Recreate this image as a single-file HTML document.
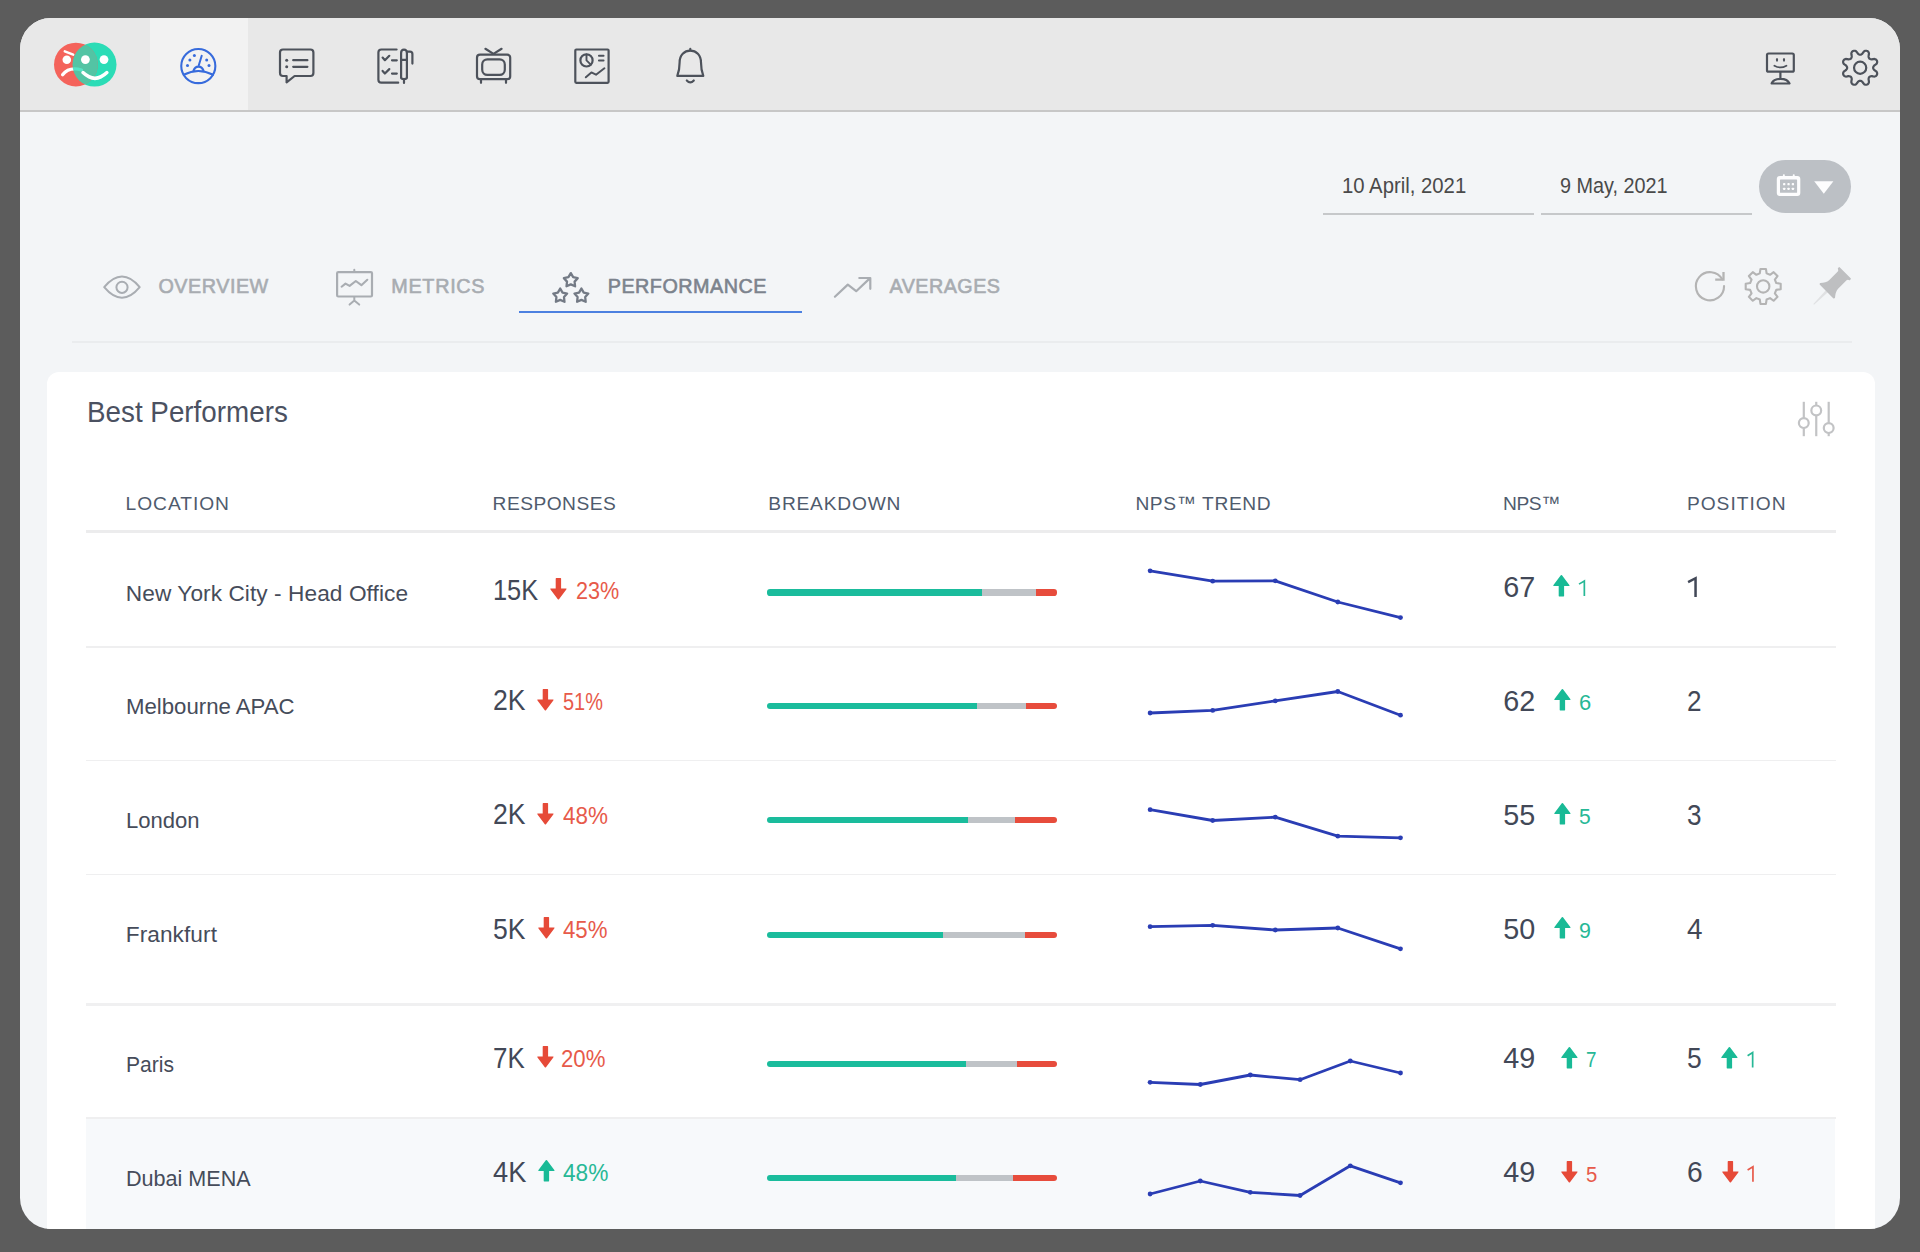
<!DOCTYPE html><html><head><meta charset="utf-8"><title>Best Performers</title><style>
html,body{margin:0;padding:0}
body{width:1920px;height:1252px;background:#5c5c5c;overflow:hidden;position:relative;font-family:"Liberation Sans",sans-serif}
#win{position:absolute;left:20px;top:18px;width:1880px;height:1211px;border-radius:31px;background:#f3f5f7;overflow:hidden}
#pg{position:absolute;left:-20px;top:-18px;width:1920px;height:1252px}
#pg>*{position:absolute}
.t{white-space:nowrap;line-height:1;transform-origin:0 50%}
#bar{left:20px;top:18px;width:1880px;height:92.5px;background:#e8e8e8}
#act{left:149.5px;top:18px;width:98.5px;height:92.5px;background:#f2f2f2}
#barline{left:20px;top:109.9px;width:1880px;height:2px;background:#c7c7c7}
.ul{top:213.2px;height:1.6px;background:#c6c8ca}
#pill{left:1758.7px;top:160.2px;width:92px;height:52.6px;border-radius:27px;background:#bcc0c5}
#tabul{left:519px;top:311.2px;width:282.5px;height:2.2px;background:#4c80e0}
#sep{left:72px;top:341.4px;width:1780px;height:1.4px;background:#eaecee}
#card{left:46.6px;top:372px;width:1828.4px;height:900px;border-radius:12px;background:#fff}
.hl{left:86px;width:1750px;background:#efeff0}
#hov{left:86px;top:1118.6px;width:1748.5px;height:120px;background:#f7f9fb}
.bar{left:767.3px;width:290.1px;height:6.2px;border-radius:3.1px;overflow:hidden;display:flex}
.bar i{display:block;height:100%}
.a{overflow:visible}
</style></head><body><div id="win"><div id="pg">
<div id="bar"></div><div id="act"></div><div id="barline"></div>
<svg class="a" style="left:0;top:0" width="1920" height="1252" viewBox="0 0 1920 1252" fill="none" stroke-linecap="round" stroke-linejoin="round"><defs><clipPath id="gc"><circle cx="94.5" cy="64.6" r="22"/></clipPath></defs><circle cx="94.5" cy="64.6" r="22" fill="#2bdcb6"/><circle cx="75.9" cy="64.6" r="21.9" fill="#f4635b"/><circle cx="66.8" cy="59.7" r="4.3" fill="#fff"/><path d="M64.8,51.4 L73.2,54.6" stroke="#fff" stroke-width="2.5"/><path d="M62.6,74.8 Q69,66.5 81.5,70" stroke="#fff" stroke-width="3.3"/><circle cx="75.9" cy="64.6" r="21.9" fill="#2bdcb6" opacity="0.8" clip-path="url(#gc)"/><circle cx="85.4" cy="59.6" r="4.4" fill="#fff"/><circle cx="104" cy="59.6" r="4.4" fill="#fff"/><path d="M83,72.6 Q95,84 106.9,72.6" stroke="#fff" stroke-width="3.5"/><g stroke="#376bdc" stroke-width="2.1"><circle cx="198.3" cy="66.1" r="17.05"/><path d="M183.7,74.7 Q198.3,67.3 213,74.7"/><path d="M193.6,70.6 Q194.9,66.7 198.5,66.7 Q202.1,66.7 203.4,70.6" stroke-width="2.3"/><path d="M198.8,65.2 L201.7,55.7" stroke-width="2"/></g><circle cx="187.5" cy="65.5" r="1.5" fill="#376bdc"/><circle cx="189.9" cy="59.9" r="1.5" fill="#376bdc"/><circle cx="194.4" cy="55.5" r="1.5" fill="#376bdc"/><circle cx="206.7" cy="59.9" r="1.5" fill="#376bdc"/><circle cx="209" cy="65.5" r="1.5" fill="#376bdc"/><g stroke="#4d525b" stroke-width="2.2"><path d="M283,49.5 H310.4 Q313.4,49.5 313.4,52.5 V73 Q313.4,76 310.4,76 H294.6 L286.6,82.4 V76 H283 Q280,76 280,73 V52.5 Q280,49.5 283,49.5 Z"/><path d="M293.2,60.2 H307.4 M293.2,66.8 H307.4"/></g><circle cx="286.7" cy="60.2" r="1.5" fill="#4d525b"/><circle cx="286.7" cy="66.8" r="1.5" fill="#4d525b"/><g stroke="#4d525b" stroke-width="2.2"><path d="M396.6,49.5 H381.4 Q378.4,49.5 378.4,52.5 V79.7 Q378.4,82.7 381.4,82.7 H398.2"/><path d="M382.6,57.6 L384.9,60.2 L389.3,55.8 M392,60.3 H396.8"/><path d="M382.6,70.9 L384.9,73.5 L389.3,69.1 M392,73.6 H396.8"/><path d="M401.1,53 Q401.1,49.6 404,49.6 Q406.9,49.6 406.9,53 V77.5 Q406.9,79 404,79 Q401.1,79 401.1,77.5 Z M401.1,59.8 H406.9 M404,79 V83"/><path d="M407.2,51.7 H410 Q412.4,51.7 412.4,54.1 V63.6"/></g><g stroke="#4d525b" stroke-width="2.2"><rect x="477" y="54.7" width="33.2" height="24.5" rx="3"/><rect x="482.2" y="59.3" width="22.6" height="15.6" rx="5.2"/><path d="M485.4,48.8 L493.5,53.9 L501.6,48.8 M481,80 V82.8 M506,80 V82.8"/></g><g stroke="#4d525b" stroke-width="2.2"><rect x="575.3" y="49.5" width="33.3" height="33.3" rx="1"/><circle cx="586.5" cy="60.4" r="6.1"/><path d="M586.5,54.4 V60.4 L590.8,64.6" stroke-width="1.9"/><path d="M598.9,55.8 H603.6 M598.9,60.5 H603.6" stroke-width="1.9"/><path d="M585.8,77.3 L591.4,72.4 L596,74.7 L604.4,68.3" stroke-width="2"/></g><g stroke="#4d525b" stroke-width="2.2"><path d="M677.3,75.9 Q679.6,70 679.6,62.5 C679.6,55 684.4,50.7 690.3,50.7 C696.2,50.7 701,55 701,62.5 Q701,70 703.3,75.9 Z"/><path d="M690.3,48.9 V50.5 M686.8,80.5 Q690.3,84.4 693.8,80.5"/></g><g stroke="#4d525b" stroke-width="2.2"><rect x="1767" y="53.5" width="26.8" height="18.2" rx="1.5"/><path d="M1780.4,72 V78.6 M1771.6,83.5 Q1773.5,78.9 1780.5,78.9 Q1787.5,78.9 1789.5,83.5 Z"/><path d="M1774.4,65.7 Q1780.3,69.2 1786.4,65.7" stroke-width="1.8"/></g><ellipse cx="1777" cy="59.8" rx="1.1" ry="1.9" fill="#4d525b"/><ellipse cx="1784" cy="59.8" rx="1.1" ry="1.9" fill="#4d525b"/><g stroke="#4d525b" stroke-width="2.2"><path d="M1873.15,67.75 L1873.22,68.26 L1873.42,68.79 L1873.76,69.36 L1874.29,69.99 L1875.45,70.79 L1876.57,71.69 L1876.98,72.50 L1877.16,73.28 L1877.15,74.02 L1876.96,74.71 L1876.61,75.34 L1876.09,75.87 L1875.41,76.30 L1874.55,76.57 L1873.12,76.42 L1871.73,76.16 L1870.92,76.24 L1870.27,76.39 L1869.75,76.63 L1869.34,76.94 L1869.03,77.35 L1868.79,77.87 L1868.64,78.52 L1868.56,79.33 L1868.82,80.72 L1868.97,82.15 L1868.70,83.01 L1868.27,83.69 L1867.74,84.21 L1867.11,84.56 L1866.42,84.75 L1865.68,84.76 L1864.90,84.58 L1864.09,84.17 L1863.19,83.05 L1862.39,81.89 L1861.76,81.36 L1861.19,81.02 L1860.66,80.82 L1860.15,80.75 L1859.64,80.82 L1859.11,81.02 L1858.54,81.36 L1857.91,81.89 L1857.11,83.05 L1856.21,84.17 L1855.40,84.58 L1854.62,84.76 L1853.88,84.75 L1853.19,84.56 L1852.56,84.21 L1852.03,83.69 L1851.60,83.01 L1851.33,82.15 L1851.48,80.72 L1851.74,79.33 L1851.66,78.52 L1851.51,77.87 L1851.27,77.35 L1850.96,76.94 L1850.55,76.63 L1850.03,76.39 L1849.38,76.24 L1848.57,76.16 L1847.18,76.42 L1845.75,76.57 L1844.89,76.30 L1844.21,75.87 L1843.69,75.34 L1843.34,74.71 L1843.15,74.02 L1843.14,73.28 L1843.32,72.50 L1843.73,71.69 L1844.85,70.79 L1846.01,69.99 L1846.54,69.36 L1846.88,68.79 L1847.08,68.26 L1847.15,67.75 L1847.08,67.24 L1846.88,66.71 L1846.54,66.14 L1846.01,65.51 L1844.85,64.71 L1843.73,63.81 L1843.32,63.00 L1843.14,62.22 L1843.15,61.48 L1843.34,60.79 L1843.69,60.16 L1844.21,59.63 L1844.89,59.20 L1845.75,58.93 L1847.18,59.08 L1848.57,59.34 L1849.38,59.26 L1850.03,59.11 L1850.55,58.87 L1850.96,58.56 L1851.27,58.15 L1851.51,57.63 L1851.66,56.98 L1851.74,56.17 L1851.48,54.78 L1851.33,53.35 L1851.60,52.49 L1852.03,51.81 L1852.56,51.29 L1853.19,50.94 L1853.88,50.75 L1854.62,50.74 L1855.40,50.92 L1856.21,51.33 L1857.11,52.45 L1857.91,53.61 L1858.54,54.14 L1859.11,54.48 L1859.64,54.68 L1860.15,54.75 L1860.66,54.68 L1861.19,54.48 L1861.76,54.14 L1862.39,53.61 L1863.19,52.45 L1864.09,51.33 L1864.90,50.92 L1865.68,50.74 L1866.42,50.75 L1867.11,50.94 L1867.74,51.29 L1868.27,51.81 L1868.70,52.49 L1868.97,53.35 L1868.82,54.78 L1868.56,56.17 L1868.64,56.98 L1868.79,57.63 L1869.03,58.15 L1869.34,58.56 L1869.75,58.87 L1870.27,59.11 L1870.92,59.26 L1871.73,59.34 L1873.12,59.08 L1874.55,58.93 L1875.41,59.20 L1876.09,59.63 L1876.61,60.16 L1876.96,60.79 L1877.15,61.48 L1877.16,62.22 L1876.98,63.00 L1876.57,63.81 L1875.45,64.71 L1874.29,65.51 L1873.76,66.14 L1873.42,66.71 L1873.22,67.24 Z"/><circle cx="1860.15" cy="67.75" r="6.1"/></g></svg>
<div class="t" style="left:1342.30px;top:175.04px;font-size:21.22px;color:#4a4a4a;transform:scaleX(0.9570);">10 April, 2021</div>
<div class="t" style="left:1559.60px;top:175.04px;font-size:21.22px;color:#4a4a4a;transform:scaleX(0.9340);">9 May, 2021</div>
<div class="ul" style="left:1322.5px;width:211px"></div><div class="ul" style="left:1540.5px;width:211px"></div>
<div id="pill"></div>
<svg class="a" style="left:0;top:0" width="1920" height="1252" viewBox="0 0 1920 1252" fill="none" stroke-linecap="round" stroke-linejoin="round"><rect x="1776.8" y="176" width="23.5" height="20.1" rx="3" fill="#fdfdfe"/><rect x="1782.9" y="174.2" width="1.9" height="3" rx="0.8" fill="#fdfdfe"/><rect x="1792.8" y="174.2" width="1.9" height="3" rx="0.8" fill="#fdfdfe"/><rect x="1780" y="179.5" width="17.1" height="13.3" rx="0.6" fill="#bcc0c5"/><rect x="1783.05" y="183.05" width="2.3" height="2.3" rx="0.7" fill="#fdfdfe"/><rect x="1787.40" y="183.05" width="2.3" height="2.3" rx="0.7" fill="#fdfdfe"/><rect x="1791.75" y="183.05" width="2.3" height="2.3" rx="0.7" fill="#fdfdfe"/><rect x="1783.05" y="187.65" width="2.3" height="2.3" rx="0.7" fill="#fdfdfe"/><rect x="1787.40" y="187.65" width="2.3" height="2.3" rx="0.7" fill="#fdfdfe"/><rect x="1791.75" y="187.65" width="2.3" height="2.3" rx="0.7" fill="#fdfdfe"/><path d="M1814.2,181.2 H1833.4 L1823.8,193.7 Z" fill="#fdfdfe"/></svg>
<div class="t" style="left:158.40px;top:277.07px;font-size:19.77px;color:#a8acb1;letter-spacing:0.53px;-webkit-text-stroke:0.6px #a8acb1;">OVERVIEW</div>
<div class="t" style="left:391.30px;top:277.07px;font-size:19.77px;color:#a8acb1;letter-spacing:0.71px;-webkit-text-stroke:0.6px #a8acb1;">METRICS</div>
<div class="t" style="left:607.70px;top:277.07px;font-size:19.77px;color:#7c838d;letter-spacing:0.51px;-webkit-text-stroke:0.6px #7c838d;">PERFORMANCE</div>
<div class="t" style="left:889.50px;top:277.07px;font-size:19.77px;color:#a8acb1;letter-spacing:0.46px;-webkit-text-stroke:0.6px #a8acb1;">AVERAGES</div>
<div id="tabul"></div><div id="sep"></div>
<svg class="a" style="left:0;top:0" width="1920" height="1252" viewBox="0 0 1920 1252" fill="none" stroke-linecap="round" stroke-linejoin="round"><g stroke="#a9adb2" stroke-width="2"><path d="M104.2,287.2 Q122,266 139.7,287.2 Q122,308.4 104.2,287.2 Z"/><circle cx="122" cy="287.3" r="5.6"/><rect x="337.1" y="272.1" width="34.9" height="24.4" rx="1.2" stroke-width="2.2"/><path d="M354.3,269.7 V271.5 M354.3,297 V300.6 L349.6,304.6 M354.3,300.6 L359.2,304.6"/><path d="M341.6,286.7 L345.5,283.6 L349.6,285.9 L355.8,281 L361.4,285.2 L367.3,279.8" stroke-width="2.1"/><path d="M834.9,296.7 L847.8,284.6 L856.2,291.2 L869.8,278.4 M859.3,278 H870.3 V288.8" stroke-width="2.2"/></g><g stroke="#737a85" stroke-width="2.3"><path d="M570.80,273.10 L573.15,277.16 L577.74,278.14 L574.60,281.64 L575.09,286.31 L570.80,284.40 L566.51,286.31 L567.00,281.64 L563.86,278.14 L568.45,277.16 Z"/><path d="M560.20,288.55 L562.55,292.61 L567.14,293.59 L564.00,297.09 L564.49,301.76 L560.20,299.85 L555.91,301.76 L556.40,297.09 L553.26,293.59 L557.85,292.61 Z"/><path d="M581.40,288.55 L583.75,292.61 L588.34,293.59 L585.20,297.09 L585.69,301.76 L581.40,299.85 L577.11,301.76 L577.60,297.09 L574.46,293.59 L579.05,292.61 Z"/></g><g stroke="#b4b4b4" stroke-width="2.1"><path d="M1724.05,285.95 A14.1,14.1 0 1 1 1722.28,279.36"/><path d="M1723.5,271.9 V279.7 H1715.2" stroke-width="2.3" stroke-linejoin="miter" stroke-linecap="butt"/><path d="M1759.79,273.39 L1760.47,268.96 L1765.93,268.96 L1766.61,273.39 L1770.03,274.80 L1773.63,272.15 L1777.50,276.02 L1774.85,279.62 L1776.26,283.04 L1780.69,283.72 L1780.69,289.18 L1776.26,289.86 L1774.85,293.28 L1777.50,296.88 L1773.63,300.75 L1770.03,298.10 L1766.61,299.51 L1765.93,303.94 L1760.47,303.94 L1759.79,299.51 L1756.37,298.10 L1752.77,300.75 L1748.90,296.88 L1751.55,293.28 L1750.14,289.86 L1745.71,289.18 L1745.71,283.72 L1750.14,283.04 L1751.55,279.62 L1748.90,276.02 L1752.77,272.15 L1756.37,274.80 Z"/><circle cx="1763.2" cy="286.45" r="6.2"/></g><path d="M1813.35,304.06 L1826.08,289.92 L1828.13,291.97 L1813.99,304.70 Z" fill="#e0e1e3" stroke="none"/><path d="M1819.89,284.86 Q1818.97,283.94 1820.18,283.03 Q1825.97,282.74 1829.08,280.20 L1837.78,271.50 Q1838.63,270.51 1837.99,269.31 Q1837.57,268.60 1838.14,268.04 L1838.84,267.33 Q1839.34,266.83 1839.90,267.40 L1850.65,278.15 Q1851.22,278.71 1850.72,279.21 L1850.01,279.91 Q1849.45,280.48 1848.74,280.06 Q1847.54,279.42 1846.55,280.27 L1837.85,288.97 Q1835.31,292.08 1835.02,297.87 Q1834.11,299.08 1833.19,298.16 Z" fill="#bebfc1" stroke="none"/></svg>
<div id="card"></div>
<div class="t" style="left:87.40px;top:397.45px;font-size:29.36px;color:#4b5161;transform:scaleX(0.9467);">Best Performers</div>
<svg class="a" style="left:0;top:0" width="1920" height="1252" viewBox="0 0 1920 1252" fill="none" stroke-linecap="round" stroke-linejoin="round"><g stroke="#c2c3c5" stroke-width="2.2" stroke-linecap="butt"><path d="M1803.8,401.8 V436.2"/><circle cx="1803.8" cy="423.1" r="4.9" fill="#fff"/><path d="M1816.25,401.8 V436.2"/><circle cx="1816.25" cy="410.4" r="4.9" fill="#fff"/><path d="M1828.7,401.8 V436.2"/><circle cx="1828.7" cy="428.1" r="4.9" fill="#fff"/></g></svg>
<div class="t" style="left:125.60px;top:493.76px;font-size:19.19px;color:#4f5b6d;letter-spacing:0.96px;">LOCATION</div>
<div class="t" style="left:492.60px;top:493.76px;font-size:19.19px;color:#4f5b6d;letter-spacing:0.47px;">RESPONSES</div>
<div class="t" style="left:768.30px;top:493.76px;font-size:19.19px;color:#4f5b6d;letter-spacing:0.79px;">BREAKDOWN</div>
<div class="t" style="left:1135.40px;top:493.76px;font-size:19.19px;color:#4f5b6d;letter-spacing:0.62px;">NPS™ TREND</div>
<div class="t" style="left:1502.90px;top:493.76px;font-size:19.19px;color:#4f5b6d;letter-spacing:-0.34px;">NPS™</div>
<div class="t" style="left:1686.90px;top:493.76px;font-size:19.19px;color:#4f5b6d;letter-spacing:0.99px;">POSITION</div>
<div class="hl" style="top:530.3px;height:2.8px;background:#ececed"></div>
<div class="hl" style="top:645.9px;height:1.7px"></div>
<div class="hl" style="top:759.8px;height:1.7px"></div>
<div class="hl" style="top:873.6999999999999px;height:1.7px"></div>
<div class="hl" style="top:1117.2px;height:1.7px"></div>
<div class="hl" style="top:1003.1px;height:2.6px;background:#f0f0f1"></div>
<div id="hov"></div>
<div class="t" style="left:125.80px;top:581.81px;font-size:22.67px;color:#464c5a;letter-spacing:0.07px;">New York City - Head Office</div>
<div class="t" style="left:493.20px;top:575.59px;font-size:29.07px;color:#424857;transform:scaleX(0.8721);">15K</div>
<svg class="a" style="left:550.40px;top:577.70px" width="16.8" height="21.5" viewBox="0 0 16.8 21.5"><path d="M5.70,0.4 Q5.70,0 6.20,0 H10.60 Q11.10,0 11.10,0.4 V10.60 H16.20 Q16.90,10.60 16.30,11.50 L9.00,21.20 Q8.40,21.70 7.80,21.20 L0.5,11.50 Q-0.1,10.60 0.6,10.60 H5.70 Z" fill="#e64a38"/></svg>
<div class="t" style="left:575.70px;top:579.84px;font-size:23.11px;color:#e75a4a;transform:scaleX(0.9342);">23%</div>
<div class="bar" style="top:589.4px"><i style="width:215.1px;background:#1abc9c"></i><i style="width:53.6px;background:#bfc3c7"></i><i style="width:21.4px;background:#e74c3c"></i></div>
<div class="t" style="left:1503.30px;top:572.64px;font-size:28.78px;color:#424857;">67</div>
<svg class="a" style="left:1552.80px;top:575.20px" width="16.8" height="21.5" viewBox="0 0 16.8 21.5"><path d="M5.70,21.10 Q5.70,21.5 6.20,21.5 H10.60 Q11.10,21.5 11.10,21.10 V10.90 H16.20 Q16.90,10.90 16.30,10.00 L9.00,0.3 Q8.40,-0.2 7.80,0.3 L0.5,10.00 Q-0.1,10.90 0.6,10.90 H5.70 Z" fill="#19ba96"/></svg>
<svg class="a" style="left:0;top:0" width="1920" height="1252" viewBox="0 0 1920 1252" fill="none"><path d="M1579.00,584.12 L1584.35,581.01 V595.90" stroke="#27b896" stroke-width="1.7" stroke-linejoin="miter" stroke-miterlimit="6" stroke-linecap="butt"/></svg>
<svg class="a" style="left:0;top:0" width="1920" height="1252" viewBox="0 0 1920 1252" fill="none"><path d="M1688.08,582.05 L1695.55,578.25 V597.00" stroke="#424857" stroke-width="2.5" stroke-linejoin="miter" stroke-miterlimit="6" stroke-linecap="butt"/></svg>
<div class="t" style="left:125.80px;top:695.11px;font-size:22.67px;color:#464c5a;transform:scaleX(0.9793);">Melbourne APAC</div>
<div class="t" style="left:493.00px;top:686.39px;font-size:29.07px;color:#424857;transform:scaleX(0.9141);">2K</div>
<svg class="a" style="left:537.30px;top:688.50px" width="16.8" height="21.5" viewBox="0 0 16.8 21.5"><path d="M5.70,0.4 Q5.70,0 6.20,0 H10.60 Q11.10,0 11.10,0.4 V10.60 H16.20 Q16.90,10.60 16.30,11.50 L9.00,21.20 Q8.40,21.70 7.80,21.20 L0.5,11.50 Q-0.1,10.60 0.6,10.60 H5.70 Z" fill="#e64a38"/></svg>
<div class="t" style="left:562.50px;top:690.64px;font-size:23.11px;color:#e75a4a;transform:scaleX(0.8628);">51%</div>
<div class="bar" style="top:703.2px"><i style="width:209.7px;background:#1abc9c"></i><i style="width:49.2px;background:#bfc3c7"></i><i style="width:31.2px;background:#e74c3c"></i></div>
<div class="t" style="left:1503.30px;top:686.64px;font-size:28.78px;color:#424857;">62</div>
<svg class="a" style="left:1554.00px;top:689.20px" width="16.8" height="21.5" viewBox="0 0 16.8 21.5"><path d="M5.70,21.10 Q5.70,21.5 6.20,21.5 H10.60 Q11.10,21.5 11.10,21.10 V10.90 H16.20 Q16.90,10.90 16.30,10.00 L9.00,0.3 Q8.40,-0.2 7.80,0.3 L0.5,10.00 Q-0.1,10.90 0.6,10.90 H5.70 Z" fill="#19ba96"/></svg>
<div class="t" style="left:1578.90px;top:690.71px;font-size:22.67px;color:#27b896;transform:scaleX(0.9677);">6</div>
<div class="t" style="left:1687.00px;top:686.64px;font-size:28.78px;color:#424857;transform:scaleX(0.9062);">2</div>
<div class="t" style="left:125.80px;top:809.11px;font-size:22.67px;color:#464c5a;transform:scaleX(0.9740);">London</div>
<div class="t" style="left:493.00px;top:800.39px;font-size:29.07px;color:#424857;transform:scaleX(0.9141);">2K</div>
<svg class="a" style="left:537.30px;top:802.50px" width="16.8" height="21.5" viewBox="0 0 16.8 21.5"><path d="M5.70,0.4 Q5.70,0 6.20,0 H10.60 Q11.10,0 11.10,0.4 V10.60 H16.20 Q16.90,10.60 16.30,11.50 L9.00,21.20 Q8.40,21.70 7.80,21.20 L0.5,11.50 Q-0.1,10.60 0.6,10.60 H5.70 Z" fill="#e64a38"/></svg>
<div class="t" style="left:562.50px;top:804.64px;font-size:23.11px;color:#e75a4a;transform:scaleX(0.9731);">48%</div>
<div class="bar" style="top:817.3px"><i style="width:201.2px;background:#1abc9c"></i><i style="width:46.8px;background:#bfc3c7"></i><i style="width:42.1px;background:#e74c3c"></i></div>
<div class="t" style="left:1503.30px;top:800.64px;font-size:28.78px;color:#424857;">55</div>
<svg class="a" style="left:1554.00px;top:803.20px" width="16.8" height="21.5" viewBox="0 0 16.8 21.5"><path d="M5.70,21.10 Q5.70,21.5 6.20,21.5 H10.60 Q11.10,21.5 11.10,21.10 V10.90 H16.20 Q16.90,10.90 16.30,10.00 L9.00,0.3 Q8.40,-0.2 7.80,0.3 L0.5,10.00 Q-0.1,10.90 0.6,10.90 H5.70 Z" fill="#19ba96"/></svg>
<div class="t" style="left:1578.90px;top:804.71px;font-size:22.67px;color:#27b896;transform:scaleX(0.9281);">5</div>
<div class="t" style="left:1687.00px;top:800.64px;font-size:28.78px;color:#424857;transform:scaleX(0.9062);">3</div>
<div class="t" style="left:125.80px;top:923.11px;font-size:22.67px;color:#464c5a;letter-spacing:0.06px;">Frankfurt</div>
<div class="t" style="left:493.00px;top:914.59px;font-size:29.07px;color:#424857;transform:scaleX(0.9141);">5K</div>
<svg class="a" style="left:538.00px;top:916.70px" width="16.8" height="21.5" viewBox="0 0 16.8 21.5"><path d="M5.70,0.4 Q5.70,0 6.20,0 H10.60 Q11.10,0 11.10,0.4 V10.60 H16.20 Q16.90,10.60 16.30,11.50 L9.00,21.20 Q8.40,21.70 7.80,21.20 L0.5,11.50 Q-0.1,10.60 0.6,10.60 H5.70 Z" fill="#e64a38"/></svg>
<div class="t" style="left:563.00px;top:918.84px;font-size:23.11px;color:#e75a4a;transform:scaleX(0.9623);">45%</div>
<div class="bar" style="top:931.6px"><i style="width:175.6px;background:#1abc9c"></i><i style="width:82.6px;background:#bfc3c7"></i><i style="width:31.9px;background:#e74c3c"></i></div>
<div class="t" style="left:1503.30px;top:914.84px;font-size:28.78px;color:#424857;">50</div>
<svg class="a" style="left:1554.00px;top:917.40px" width="16.8" height="21.5" viewBox="0 0 16.8 21.5"><path d="M5.70,21.10 Q5.70,21.5 6.20,21.5 H10.60 Q11.10,21.5 11.10,21.10 V10.90 H16.20 Q16.90,10.90 16.30,10.00 L9.00,0.3 Q8.40,-0.2 7.80,0.3 L0.5,10.00 Q-0.1,10.90 0.6,10.90 H5.70 Z" fill="#19ba96"/></svg>
<div class="t" style="left:1579.20px;top:918.91px;font-size:22.67px;color:#27b896;transform:scaleX(0.9439);">9</div>
<div class="t" style="left:1686.50px;top:914.84px;font-size:28.78px;color:#424857;transform:scaleX(0.9687);">4</div>
<div class="t" style="left:125.80px;top:1052.51px;font-size:22.67px;color:#464c5a;transform:scaleX(0.9293);">Paris</div>
<div class="t" style="left:493.00px;top:1043.69px;font-size:29.07px;color:#424857;transform:scaleX(0.8916);">7K</div>
<svg class="a" style="left:536.70px;top:1045.80px" width="16.8" height="21.5" viewBox="0 0 16.8 21.5"><path d="M5.70,0.4 Q5.70,0 6.20,0 H10.60 Q11.10,0 11.10,0.4 V10.60 H16.20 Q16.90,10.60 16.30,11.50 L9.00,21.20 Q8.40,21.70 7.80,21.20 L0.5,11.50 Q-0.1,10.60 0.6,10.60 H5.70 Z" fill="#e64a38"/></svg>
<div class="t" style="left:561.30px;top:1047.94px;font-size:23.11px;color:#e75a4a;transform:scaleX(0.9601);">20%</div>
<div class="bar" style="top:1061.0px"><i style="width:198.8px;background:#1abc9c"></i><i style="width:51.3px;background:#bfc3c7"></i><i style="width:40.0px;background:#e74c3c"></i></div>
<div class="t" style="left:1503.30px;top:1044.24px;font-size:28.78px;color:#424857;">49</div>
<svg class="a" style="left:1561.00px;top:1046.80px" width="16.8" height="21.5" viewBox="0 0 16.8 21.5"><path d="M5.70,21.10 Q5.70,21.5 6.20,21.5 H10.60 Q11.10,21.5 11.10,21.10 V10.90 H16.20 Q16.90,10.90 16.30,10.00 L9.00,0.3 Q8.40,-0.2 7.80,0.3 L0.5,10.00 Q-0.1,10.90 0.6,10.90 H5.70 Z" fill="#19ba96"/></svg>
<div class="t" style="left:1586.00px;top:1048.31px;font-size:22.67px;color:#27b896;transform:scaleX(0.8329);">7</div>
<div class="t" style="left:1687.00px;top:1044.24px;font-size:28.78px;color:#424857;transform:scaleX(0.9187);">5</div>
<svg class="a" style="left:1721.00px;top:1046.80px" width="16.8" height="21.5" viewBox="0 0 16.8 21.5"><path d="M5.70,21.10 Q5.70,21.5 6.20,21.5 H10.60 Q11.10,21.5 11.10,21.10 V10.90 H16.20 Q16.90,10.90 16.30,10.00 L9.00,0.3 Q8.40,-0.2 7.80,0.3 L0.5,10.00 Q-0.1,10.90 0.6,10.90 H5.70 Z" fill="#19ba96"/></svg>
<svg class="a" style="left:0;top:0" width="1920" height="1252" viewBox="0 0 1920 1252" fill="none"><path d="M1747.60,1055.72 L1752.65,1052.61 V1067.50" stroke="#27b896" stroke-width="1.7" stroke-linejoin="miter" stroke-miterlimit="6" stroke-linecap="butt"/></svg>
<div class="t" style="left:125.80px;top:1166.81px;font-size:22.67px;color:#464c5a;transform:scaleX(0.9522);">Dubai MENA</div>
<div class="t" style="left:493.00px;top:1158.09px;font-size:29.07px;color:#424857;transform:scaleX(0.9366);">4K</div>
<svg class="a" style="left:538.30px;top:1160.20px" width="16.8" height="21.5" viewBox="0 0 16.8 21.5"><path d="M5.70,21.10 Q5.70,21.5 6.20,21.5 H10.60 Q11.10,21.5 11.10,21.10 V10.90 H16.20 Q16.90,10.90 16.30,10.00 L9.00,0.3 Q8.40,-0.2 7.80,0.3 L0.5,10.00 Q-0.1,10.90 0.6,10.90 H5.70 Z" fill="#19ba96"/></svg>
<div class="t" style="left:563.30px;top:1162.34px;font-size:23.11px;color:#27b896;transform:scaleX(0.9817);">48%</div>
<div class="bar" style="top:1175.2px"><i style="width:188.6px;background:#1abc9c"></i><i style="width:56.9px;background:#bfc3c7"></i><i style="width:44.6px;background:#e74c3c"></i></div>
<div class="t" style="left:1503.30px;top:1158.44px;font-size:28.78px;color:#424857;">49</div>
<svg class="a" style="left:1561.00px;top:1161.00px" width="16.8" height="21.5" viewBox="0 0 16.8 21.5"><path d="M5.70,0.4 Q5.70,0 6.20,0 H10.60 Q11.10,0 11.10,0.4 V10.60 H16.20 Q16.90,10.60 16.30,11.50 L9.00,21.20 Q8.40,21.70 7.80,21.20 L0.5,11.50 Q-0.1,10.60 0.6,10.60 H5.70 Z" fill="#e64a38"/></svg>
<div class="t" style="left:1586.00px;top:1162.51px;font-size:22.67px;color:#e75a4a;transform:scaleX(0.8963);">5</div>
<div class="t" style="left:1687.00px;top:1158.44px;font-size:28.78px;color:#424857;transform:scaleX(0.9812);">6</div>
<svg class="a" style="left:1721.50px;top:1161.00px" width="16.8" height="21.5" viewBox="0 0 16.8 21.5"><path d="M5.70,0.4 Q5.70,0 6.20,0 H10.60 Q11.10,0 11.10,0.4 V10.60 H16.20 Q16.90,10.60 16.30,11.50 L9.00,21.20 Q8.40,21.70 7.80,21.20 L0.5,11.50 Q-0.1,10.60 0.6,10.60 H5.70 Z" fill="#e64a38"/></svg>
<svg class="a" style="left:0;top:0" width="1920" height="1252" viewBox="0 0 1920 1252" fill="none"><path d="M1747.60,1169.92 L1752.95,1166.81 V1181.70" stroke="#e75a4a" stroke-width="1.7" stroke-linejoin="miter" stroke-miterlimit="6" stroke-linecap="butt"/></svg>
<svg class="a" style="left:0;top:0" width="1920" height="1252" viewBox="0 0 1920 1252"><polyline points="1150.1,570.8 1212.7,581.2 1275.3,580.8 1337.8,602.0 1400.5,617.6" fill="none" stroke="#2a3db4" stroke-width="2.8" stroke-linejoin="round" stroke-linecap="round"/><circle cx="1150.1" cy="570.8" r="2.4" fill="#2a3db4"/><circle cx="1212.7" cy="581.2" r="2.4" fill="#2a3db4"/><circle cx="1275.3" cy="580.8" r="2.4" fill="#2a3db4"/><circle cx="1337.8" cy="602.0" r="2.4" fill="#2a3db4"/><circle cx="1400.5" cy="617.6" r="2.4" fill="#2a3db4"/><polyline points="1150.1,713.0 1212.7,710.4 1275.3,700.9 1337.8,691.5 1400.5,715.2" fill="none" stroke="#2a3db4" stroke-width="2.8" stroke-linejoin="round" stroke-linecap="round"/><circle cx="1150.1" cy="713.0" r="2.4" fill="#2a3db4"/><circle cx="1212.7" cy="710.4" r="2.4" fill="#2a3db4"/><circle cx="1275.3" cy="700.9" r="2.4" fill="#2a3db4"/><circle cx="1337.8" cy="691.5" r="2.4" fill="#2a3db4"/><circle cx="1400.5" cy="715.2" r="2.4" fill="#2a3db4"/><polyline points="1150.1,809.7 1212.7,820.5 1275.3,817.2 1337.8,836.2 1400.5,837.8" fill="none" stroke="#2a3db4" stroke-width="2.8" stroke-linejoin="round" stroke-linecap="round"/><circle cx="1150.1" cy="809.7" r="2.4" fill="#2a3db4"/><circle cx="1212.7" cy="820.5" r="2.4" fill="#2a3db4"/><circle cx="1275.3" cy="817.2" r="2.4" fill="#2a3db4"/><circle cx="1337.8" cy="836.2" r="2.4" fill="#2a3db4"/><circle cx="1400.5" cy="837.8" r="2.4" fill="#2a3db4"/><polyline points="1150.1,926.7 1212.7,925.3 1275.3,930.0 1337.8,928.0 1400.5,948.8" fill="none" stroke="#2a3db4" stroke-width="2.8" stroke-linejoin="round" stroke-linecap="round"/><circle cx="1150.1" cy="926.7" r="2.4" fill="#2a3db4"/><circle cx="1212.7" cy="925.3" r="2.4" fill="#2a3db4"/><circle cx="1275.3" cy="930.0" r="2.4" fill="#2a3db4"/><circle cx="1337.8" cy="928.0" r="2.4" fill="#2a3db4"/><circle cx="1400.5" cy="948.8" r="2.4" fill="#2a3db4"/><polyline points="1150.1,1082.3 1200.3,1084.5 1250.3,1075.0 1300.1,1079.7 1350.3,1061.0 1400.5,1073.0" fill="none" stroke="#2a3db4" stroke-width="2.8" stroke-linejoin="round" stroke-linecap="round"/><circle cx="1150.1" cy="1082.3" r="2.4" fill="#2a3db4"/><circle cx="1200.3" cy="1084.5" r="2.4" fill="#2a3db4"/><circle cx="1250.3" cy="1075.0" r="2.4" fill="#2a3db4"/><circle cx="1300.1" cy="1079.7" r="2.4" fill="#2a3db4"/><circle cx="1350.3" cy="1061.0" r="2.4" fill="#2a3db4"/><circle cx="1400.5" cy="1073.0" r="2.4" fill="#2a3db4"/><polyline points="1150.1,1194.0 1200.3,1181.0 1250.3,1192.3 1300.1,1195.5 1350.3,1165.8 1400.5,1182.8" fill="none" stroke="#2a3db4" stroke-width="2.8" stroke-linejoin="round" stroke-linecap="round"/><circle cx="1150.1" cy="1194.0" r="2.4" fill="#2a3db4"/><circle cx="1200.3" cy="1181.0" r="2.4" fill="#2a3db4"/><circle cx="1250.3" cy="1192.3" r="2.4" fill="#2a3db4"/><circle cx="1300.1" cy="1195.5" r="2.4" fill="#2a3db4"/><circle cx="1350.3" cy="1165.8" r="2.4" fill="#2a3db4"/><circle cx="1400.5" cy="1182.8" r="2.4" fill="#2a3db4"/></svg>
</div></div></body></html>
